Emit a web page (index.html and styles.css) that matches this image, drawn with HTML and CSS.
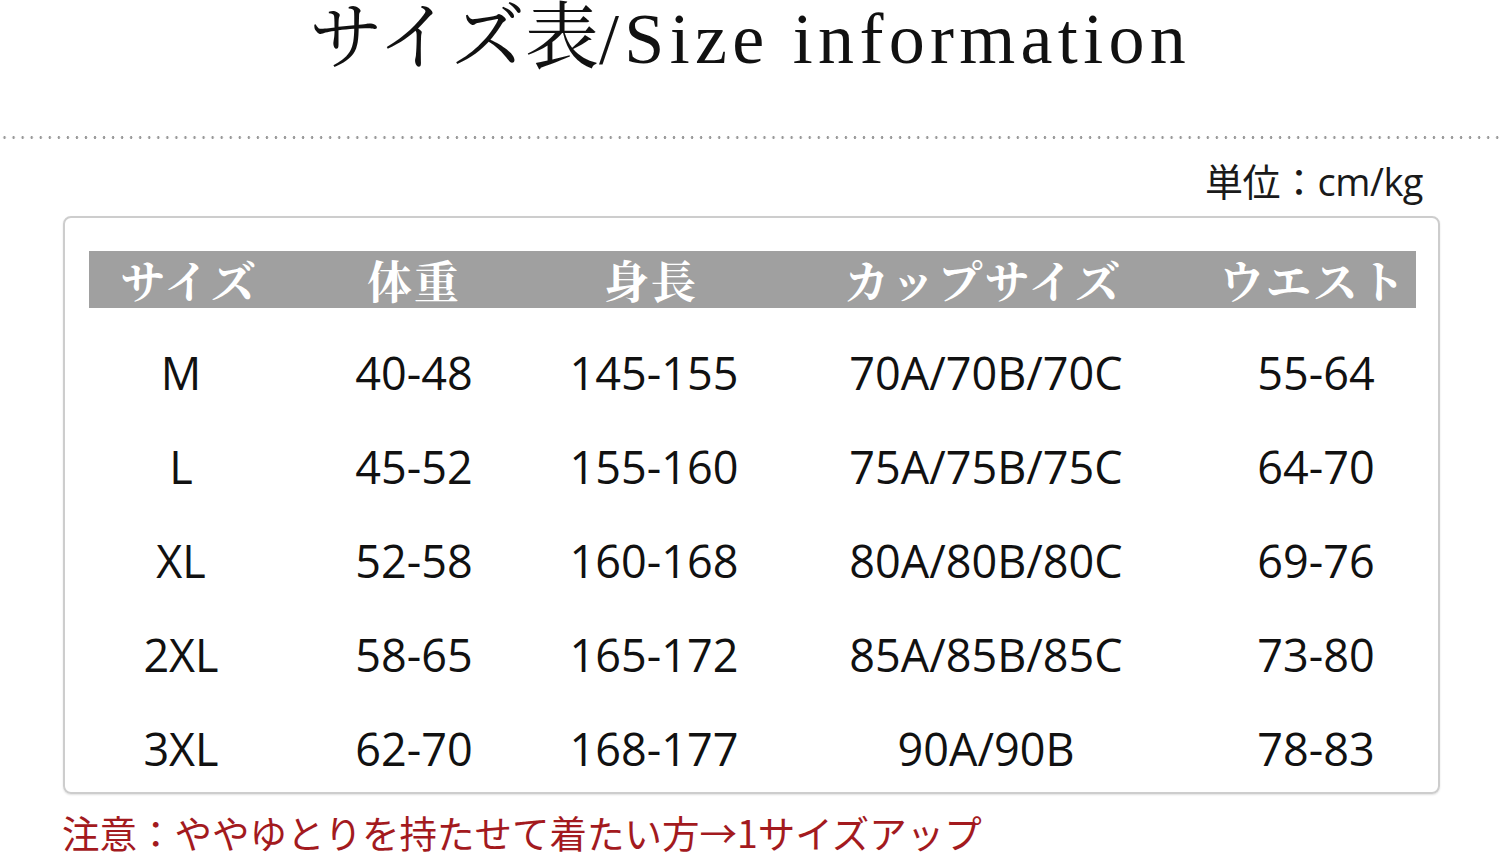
FILE: index.html
```html
<!DOCTYPE html>
<html lang="ja">
<head>
<meta charset="utf-8">
<title>サイズ表</title>
<link rel="stylesheet" href="styles.css">
</head>
<body>
<h1 class="title"><span class="title-ja">サイズ表</span><span class="title-en">/Size information</span></h1>
<div class="dots"></div>
<p class="unit">単位：cm/kg</p>
<div class="card">
  <div class="head">
    <div class="cell">サイズ</div>
    <div class="cell">体重</div>
    <div class="cell">身長</div>
    <div class="cell">カップサイズ</div>
    <div class="cell">ウエスト</div>
  </div>
  <div class="rows">
    <div class="row"><div class="cell c1">M</div><div class="cell">40-48</div><div class="cell c3">145-155</div><div class="cell c4">70A/70B/70C</div><div class="cell c5">55-64</div></div>
    <div class="row"><div class="cell c1">L</div><div class="cell">45-52</div><div class="cell c3">155-160</div><div class="cell c4">75A/75B/75C</div><div class="cell c5">64-70</div></div>
    <div class="row"><div class="cell c1">XL</div><div class="cell">52-58</div><div class="cell c3">160-168</div><div class="cell c4">80A/80B/80C</div><div class="cell c5">69-76</div></div>
    <div class="row"><div class="cell c1">2XL</div><div class="cell">58-65</div><div class="cell c3">165-172</div><div class="cell c4">85A/85B/85C</div><div class="cell c5">73-80</div></div>
    <div class="row"><div class="cell c1">3XL</div><div class="cell">62-70</div><div class="cell c3">168-177</div><div class="cell c4">90A/90B</div><div class="cell c5">78-83</div></div>
  </div>
</div>
<p class="note">注意：ややゆとりを持たせて着たい方→1サイズアップ</p>
</body>
</html>
```
FILE: styles.css
```css
html, body {
  margin: 0;
  padding: 0;
  background: #ffffff;
}
body {
  width: 1500px;
  height: 854px;
  overflow: hidden;
  font-family: "Open Sans", "Noto Sans CJK JP", sans-serif;
  color: #111;
}
.title {
  margin: 0;
  height: 77px;
  line-height: 62px;
  text-align: center;
  font-weight: 400;
  font-size: 72px;
  color: #111;
  white-space: nowrap;
}
.title-ja {
  font-family: "Noto Serif CJK JP", "Liberation Serif", serif;
  font-weight: 400;
  font-size: 74px;
  letter-spacing: 0;
}
.title-en {
  font-family: "Liberation Serif", serif;
  font-size: 72px;
  letter-spacing: 5.3px;
}
.dots {
  margin-top: 59px;
  height: 3px;
  background-image: radial-gradient(circle, #9a9a9a 1.1px, transparent 1.5px);
  background-size: 9.05px 3px;
  background-position: 0 0;
}
.unit {
  margin: 20px 0 0 0;
  height: 44px;
  line-height: 44px;
  padding-right: 77px;
  text-align: right;
  font-size: 38px;
  font-weight: 400;
  color: #1a1a1a;
  font-family: "Open Sans", "Noto Sans CJK JP", sans-serif;
  letter-spacing: -0.5px;
}
.card {
  box-sizing: border-box;
  margin: 13px 0 0 63px;
  width: 1377px;
  height: 578px;
  border: 2px solid #cdcdcd;
  border-radius: 8px;
  padding: 33px 22px 0 24px;
  box-shadow: 0 1px 2px rgba(0,0,0,0.12);
}
.head,
.row {
  display: grid;
  grid-template-columns: 192px 266px 208px 456px 204px;
}
.head {
  height: 57px;
  background: #a0a0a0;
}
.head .cell {
  text-align: center;
  line-height: 57px;
  color: #ffffff;
  font-family: "Noto Serif CJK JP", "Noto Sans CJK JP", serif;
  font-weight: 700;
  font-size: 45px;
  letter-spacing: 2px;
  white-space: nowrap;
}
.head .cell:first-child { padding-left: 8px; }
.rows {
  margin-top: 18px;
}
.row {
  height: 94px;
}
.row .cell {
  text-align: center;
  line-height: 94px;
  font-size: 45px;
  font-weight: 400;
  color: #111;
  white-space: nowrap;
}
.row .c1 { padding-right: 8px; }
.row .c3 { padding-left: 6px; }
.row .c4 { padding-left: 6px; }
.row .c5 { padding-left: 6px; }
.note {
  margin: 18px 0 0 62px;
  height: 40px;
  line-height: 40px;
  font-size: 37.5px;
  color: #a31a1e;
  font-family: "Noto Sans CJK JP", sans-serif;
  font-weight: 400;
  white-space: nowrap;
}
```
